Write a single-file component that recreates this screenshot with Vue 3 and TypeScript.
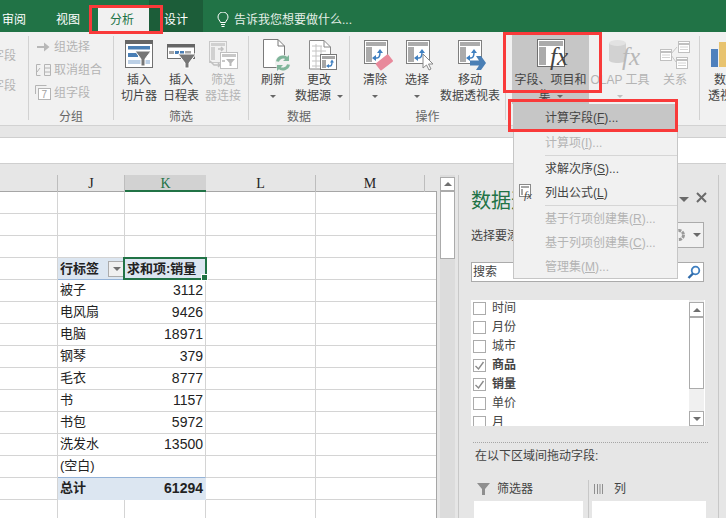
<script setup lang="ts">
interface Row { label: string; value: string }
const topBlank = [0, 1, 2]
const rows: Row[] = [
  { label: '被子', value: '3112' },
  { label: '电风扇', value: '9426' },
  { label: '电脑', value: '18971' },
  { label: '钢琴', value: '379' },
  { label: '毛衣', value: '8777' },
  { label: '书', value: '1157' },
  { label: '书包', value: '5972' },
  { label: '洗发水', value: '13500' },
  { label: '(空白)', value: '' },
]
const heads = [
  { t: '', c: '' },
  { t: 'J', c: '' },
  { t: 'K', c: 'sel' },
  { t: 'L', c: '' },
  { t: 'M', c: '' },
  { t: '', c: 'end' },
]
interface Item { a: string; k: string; b: string; off: boolean; sep: boolean; hi: boolean; fx: boolean }
const items: Item[] = [
  { a: '计算字段(', k: 'F', b: ')...', off: false, sep: false, hi: true, fx: false },
  { a: '计算项(', k: 'I', b: ')...', off: true, sep: true, hi: false, fx: false },
  { a: '求解次序(', k: 'S', b: ')...', off: false, sep: false, hi: false, fx: false },
  { a: '列出公式(', k: 'L', b: ')', off: false, sep: true, hi: false, fx: true },
  { a: '基于行项创建集(', k: 'R', b: ')...', off: true, sep: false, hi: false, fx: false },
  { a: '基于列项创建集(', k: 'C', b: ')...', off: true, sep: false, hi: false, fx: false },
  { a: '管理集(', k: 'M', b: ')...', off: true, sep: false, hi: false, fx: false },
]
const fields = [
  { n: '时间', on: false },
  { n: '月份', on: false },
  { n: '城市', on: false },
  { n: '商品', on: true },
  { n: '销量', on: true },
  { n: '单价', on: false },
  { n: '月', on: false },
]
</script>

<template>
  <div class="app">
    <header class="tabs">
      <span class="tab">审阅</span>
      <span class="tab">视图</span>
      <span class="tab active">分析</span>
      <span class="tab ctx">设计</span>
      <svg class="bulb" width="12" height="16" viewBox="0 0 12 16" fill="none" stroke="#fff" stroke-width="1">
        <path d="M3.5 10.5C3 8.500 1 7.500 1 5a5 5 0 0 1 10 0c0 2.500-2 3.500-2.500 5.500z" />
        <path d="M4 12.500h4M4.500 14.500h3" />
      </svg>
      <span class="tell">告诉我您想要做什么...</span>
    </header>

    <section class="ribbon">
      <div class="grp g0">
        <div class="cut">字段</div>
        <div class="cut">字段</div>
      </div>
      <i class="sep"></i>

      <div class="grp g1">
        <div class="small">
          <svg width="16" height="14" viewBox="0 0 16 14"><path d="M2 6h7V2.500L14.500 7 9 11.500V8H2z" fill="#b8b8b8" /></svg>
          <span>组选择</span>
        </div>
        <div class="small">
          <svg width="16" height="14" viewBox="0 0 16 14" fill="none" stroke="#b4b4b4"><path d="M5.500 1.500h-4v11h4M9.500 1.500h6v11h-6zM9.500 5h6M9.500 9h6M2 9l3-4" /></svg>
          <span>取消组合</span>
        </div>
        <div class="small">
          <svg width="16" height="15" viewBox="0 0 16 15" fill="none" stroke="#b4b4b4"><path d="M.500 9V.500h11" /><rect x="3.500" y="3.500" width="12" height="11" fill="#fff" /><text x="6.500" y="13" class="seven">7</text></svg>
          <span>组字段</span>
        </div>
        <div class="glabel">分组</div>
      </div>
      <i class="sep"></i>

      <div class="grp g2">
        <div class="btns">
          <div class="btn w42">
            <svg width="32" height="32" viewBox="0 0 32 32">
              <rect x="2.500" y="2.500" width="27" height="27" fill="#fff" stroke="#707070" />
              <rect x="2" y="2" width="28" height="4" fill="#666" />
              <rect x="5" y="8" width="22" height="3.500" fill="#4a7fb5" />
              <rect x="5" y="15" width="10" height="4" fill="#4a7fb5" />
              <rect x="5" y="22" width="22" height="4" fill="#bcd0e6" />
              <path d="M12 13h16l-6 8v7h-4v-7z" fill="#767676" stroke="#fff" />
            </svg>
            <span>插入</span><span>切片器</span>
          </div>
          <div class="btn w42">
            <svg width="32" height="32" viewBox="0 0 32 32">
              <rect x="2.500" y="6.500" width="27" height="14" fill="#fff" stroke="#707070" />
              <rect x="2" y="6" width="28" height="3.500" fill="#666" />
              <rect x="4" y="13" width="5" height="3" fill="#a6a6a6" />
              <rect x="10" y="13" width="4" height="3" fill="#4a7fb5" />
              <rect x="15" y="13" width="4" height="3" fill="#4a7fb5" />
              <rect x="20" y="13" width="6" height="3" fill="#a6a6a6" />
              <path d="M13 16h18l-7 9v5h-4v-5z" fill="#767676" stroke="#fff" />
            </svg>
            <span>插入</span><span>日程表</span>
          </div>
          <div class="btn w42 off">
            <svg width="32" height="32" viewBox="0 0 32 32">
              <rect x="2.500" y="3.500" width="17" height="21" fill="#f1f1f1" stroke="#c8c8c8" />
              <rect x="4" y="5" width="14" height="3" fill="#d0d0d0" />
              <rect x="4" y="9" width="4" height="13" fill="#d0d0d0" />
              <path d="M11 11h5M14 9l2 2-2 2M3 23l4 4h6M11 25l2 2-2 2" fill="none" stroke="#c0c0c0" stroke-width="1.500" />
              <rect x="13.500" y="14.500" width="17" height="16" fill="#fff" stroke="#c0c0c0" />
              <rect x="15" y="16" width="14" height="3" fill="#c8c8c8" />
              <path d="M19 21h9l-3.500 4v3h-2v-3z" fill="#b8b8b8" />
              <rect x="15" y="22" width="3" height="2" fill="#c8c8c8" />
            </svg>
            <span>筛选</span><span>器连接</span>
          </div>
        </div>
        <div class="glabel">筛选</div>
      </div>
      <i class="sep"></i>

      <div class="grp g3">
        <div class="btns">
          <div class="btn w46">
            <svg width="32" height="32" viewBox="0 0 32 32" class="vis">
              <path d="M6.500 1.500H21L27.500 8v21.500h-21z" fill="#fff" stroke="#7a7a7a" />
              <path d="M21 1.500V8h6.500" fill="none" stroke="#7a7a7a" />
              <circle cx="26" cy="25" r="8" fill="#f1f1f1" />
              <path d="M20.500 23.500A5.700 5.700 0 0 1 30 20.500M31.500 26.500A5.700 5.700 0 0 1 22 29.500" fill="none" stroke="#7fb59a" stroke-width="3" />
              <path d="M32 17v6h-6zM20 33v-6h6z" fill="#7fb59a" />
            </svg>
            <span>刷新</span><span class="line"><b class="caret"></b></span>
          </div>
          <div class="btn w46">
            <svg width="32" height="32" viewBox="0 0 32 32" class="vis">
              <path d="M6.500 2.500H21L27.500 9v22h-21z" fill="#fff" stroke="#8a8a8a" />
              <path d="M21 2.500V9h6.500" fill="none" stroke="#8a8a8a" />
              <path d="M9 8h10M9 13h14M9 18h14M9 23h10M9 28h8M13 6v24M18 8v22" stroke="#c4c4c4" fill="none" />
              <rect x="17.500" y="16.500" width="16" height="15" fill="#fff" stroke="#777" />
              <rect x="19" y="18" width="13" height="3" fill="#a6a6a6" />
              <rect x="19" y="22" width="4" height="8" fill="#a6a6a6" />
              <path d="M25 28h2q2 0 2-4" fill="none" stroke="#3f7fc0" stroke-width="1.400" />
              <path d="M27 24.500l2-3 2 3zM26 26v4l-3-2z" fill="#3f7fc0" />
            </svg>
            <span>更改</span><span class="line">数据源<b class="caret side"></b></span>
          </div>
        </div>
        <div class="glabel">数据</div>
      </div>
      <i class="sep"></i>

      <div class="grp g4">
        <div class="btns">
          <div class="btn w42">
            <svg width="32" height="32" viewBox="0 0 32 32" class="vis">
              <rect x="5.500" y="2.500" width="23" height="23" fill="#fff" stroke="#7f7f7f" />
              <rect x="7" y="4" width="20" height="4" fill="#ababab" />
              <rect x="7" y="9" width="6" height="15" fill="#ababab" />
              <path d="M16 20h2q3 0 3-6" fill="none" stroke="#3f7fc0" stroke-width="1.500" />
              <path d="M18 15l3-4 3 4zM17 17v6l-4-3z" fill="#3f7fc0" />
              <rect x="17" y="20" width="16" height="9" rx="1" transform="rotate(-38 25 24)" fill="#e8899b" />
            </svg>
            <span>清除</span><span class="line"><b class="caret"></b></span>
          </div>
          <div class="btn w42">
            <svg width="32" height="32" viewBox="0 0 32 32" class="vis">
              <rect x="5.500" y="2.500" width="23" height="23" fill="#fff" stroke="#7f7f7f" />
              <rect x="7" y="4" width="20" height="4" fill="#ababab" />
              <rect x="7" y="9" width="6" height="15" fill="#ababab" />
              <path d="M16 20h2q3 0 3-6" fill="none" stroke="#3f7fc0" stroke-width="1.500" />
              <path d="M18 15l3-4 3 4zM17 17v6l-4-3z" fill="#3f7fc0" />
              <path d="M22 16v14l3.500-3 2.500 5 2-1-2.500-5H32z" fill="#fff" stroke="#888" />
            </svg>
            <span>选择</span><span class="line"><b class="caret"></b></span>
          </div>
          <div class="btn w64">
            <svg width="32" height="32" viewBox="0 0 32 32" class="vis">
              <rect x="4.500" y="2.500" width="23" height="23" fill="#fff" stroke="#7f7f7f" />
              <rect x="6" y="4" width="20" height="4" fill="#ababab" />
              <rect x="6" y="9" width="6" height="15" fill="#ababab" />
              <path d="M15 20h2q3 0 3-6" fill="none" stroke="#3f7fc0" stroke-width="1.500" />
              <path d="M17 15l3-4 3 4zM16 17v6l-4-3z" fill="#3f7fc0" />
              <path d="M16 22.500h9L22 18h5l5 7-5 7h-5l3-4.500h-9z" fill="#4a7fb5" />
            </svg>
            <span>移动</span><span>数据透视表</span>
          </div>
        </div>
        <div class="glabel">操作</div>
      </div>
      <i class="sep"></i>

      <div class="grp g5">
        <div class="btns">
          <div class="btn w77 hot">
            <svg width="34" height="32" viewBox="0 0 34 32" class="vis">
              <rect x="3.500" y="1.500" width="27" height="27" fill="#fff" stroke="#707070" />
              <rect x="5" y="3" width="24" height="5" fill="#ababab" />
              <rect x="5" y="9" width="7" height="18" fill="#ababab" />
              <text x="16" y="27" class="fx">fx</text>
            </svg>
            <span>字段、项目和</span><span class="line">集<b class="caret side"></b></span>
          </div>
          <div class="btn w62 off">
            <svg width="32" height="32" viewBox="0 0 32 32" class="vis">
              <path d="M5 5v17c0 4 17 4 17 0V5z" fill="#d2d2d2" />
              <ellipse cx="13.500" cy="5" rx="8.500" ry="3" fill="#e2e2e2" />
              <text x="18" y="27" class="fx fxoff">fx</text>
            </svg>
            <span>OLAP 工具</span><span class="line"><b class="caret lite"></b></span>
          </div>
          <div class="btn w48 off">
            <svg width="32" height="32" viewBox="0 0 32 32" class="vis">
              <path d="M12 16l6-7M12 17l5 7" stroke="#c8c8c8" fill="none" />
              <rect x="1.500" y="11.500" width="11" height="11" fill="#fff" stroke="#c0c0c0" />
              <rect x="19.500" y="3.500" width="11" height="11" fill="#fff" stroke="#c0c0c0" />
              <rect x="17.500" y="19.500" width="11" height="11" fill="#fff" stroke="#c0c0c0" />
              <path d="M2 14h10M20 6h10M18 22h10" stroke="#c0c0c0" stroke-width="2" />
              <path d="M3 17h8M3 19.500h8M21 9h8M21 11.500h8M19 25h8M19 27.500h8" stroke="#d4d4d4" />
            </svg>
            <span>关系</span>
          </div>
        </div>
      </div>
      <i class="sep"></i>

      <div class="grp g6">
        <div class="btns">
          <div class="btn w52">
            <svg width="32" height="32" viewBox="0 0 32 32" class="vis">
              <rect x="1" y="11" width="7" height="18" fill="#4f81bd" />
              <rect x="9" y="4" width="12" height="25" fill="#e8c36f" />
            </svg>
            <span>数据</span><span>透视表</span>
          </div>
        </div>
      </div>
    </section>

    <div class="band"></div>
    <div class="fbar"></div>
    <div class="gap"></div>

    <main class="main">
      <div class="sheet">
        <div class="colheads">
          <span v-for="(h, i) in heads" :key="i" class="ch" :class="h.c">{{ h.t }}</span>
        </div>
        <div class="body">
          <div v-for="r in topBlank" :key="r" class="row">
            <span class="c"></span><span class="c"></span><span class="c"></span><span class="c"></span><span class="c last"></span>
          </div>
          <div class="row">
            <span class="c"></span>
            <span class="c jc phead"><span>行标签</span><span class="drop"><b></b></span></span>
            <span class="c kc phead selected"><span>求和项:销量</span></span>
            <span class="c"></span><span class="c last"></span>
          </div>
          <div v-for="(r, i) in rows" :key="r.label" class="row">
            <span class="c"></span>
            <span class="c jc" :class="{ lastp: i === rows.length - 1 }">{{ r.label }}</span>
            <span class="c num" :class="{ lastp: i === rows.length - 1 }">{{ r.value }}</span>
            <span class="c"></span><span class="c last"></span>
          </div>
          <div class="row">
            <span class="c"></span>
            <span class="c jc ptotal">总计</span>
            <span class="c num ptotal">61294</span>
            <span class="c"></span><span class="c last"></span>
          </div>
          <div class="row">
            <span class="c"></span><span class="c"></span><span class="c"></span><span class="c"></span><span class="c last"></span>
          </div>
        </div>
      </div>

      <div class="vscroll">
        <div class="vtrack">
          <div class="vbtn"><b class="up"></b></div>
          <div class="vthumb"></div>
        </div>
      </div>

      <aside class="pane">
        <div class="ptitle">
          <span class="ptext">数据透视表字段</span>
          <b class="pcaret"></b>
          <svg width="11" height="11" viewBox="0 0 11 11"><path d="M1 1l9 9M10 1l-9 9" stroke="#6a6a6a" stroke-width="2" /></svg>
        </div>
        <div class="pick">
          <span class="picktext">选择要添加到报表的字段:</span>
          <div class="gearbox">
            <svg width="14" height="14" viewBox="0 0 14 14"><circle cx="7" cy="7" r="4.500" fill="none" stroke="#9a9a9a" stroke-width="3" stroke-dasharray="3 1" /></svg>
            <b class="pcaret mini"></b>
          </div>
        </div>
        <div class="search">
          <span>搜索</span>
          <svg width="14" height="14" viewBox="0 0 14 14"><circle cx="8.500" cy="5.500" r="3.800" fill="none" stroke="#3f7fc0" stroke-width="1.800" /><path d="M6 8.500L1.500 13" stroke="#2f6aa8" stroke-width="2.400" /></svg>
        </div>
        <div class="list">
          <div class="lrows">
            <div v-for="f in fields" :key="f.n" class="lrow">
              <span class="cb">
                <svg v-if="f.on" width="11" height="11" viewBox="0 0 11 11"><path d="M1.500 6l3 3 5-7" fill="none" stroke="#8a8a8a" stroke-width="1.400" /></svg>
              </span>
              <span class="ltext" :class="{ strong: f.on }">{{ f.n }}</span>
            </div>
          </div>
          <div class="lscroll">
            <div class="lbtn"><b class="up"></b></div>
            <div class="lthumb"></div>
            <div class="lspace"></div>
            <div class="lbtn"><b class="down"></b></div>
          </div>
        </div>
        <div class="dots"></div>
        <div class="drag">在以下区域间拖动字段:</div>
        <div class="areas">
          <div class="area left">
            <div class="ahead">
              <svg width="13" height="12" viewBox="0 0 13 12"><path d="M0 0h13L8 6v6H5V6z" fill="#8f8f8f" /></svg>
              <span>筛选器</span>
            </div>
            <div class="abox"></div>
          </div>
          <div class="area right">
            <div class="ahead">
              <svg width="9" height="10" viewBox="0 0 9 10"><path d="M.5 0v10M3.500 0v10M6 0v10M8.500 0v10" stroke="#8f8f8f" /></svg>
              <span class="lie">列</span>
            </div>
            <div class="abox"></div>
          </div>
        </div>
      </aside>
    </main>

    <nav class="menu">
      <template v-for="m in items" :key="m.a">
        <div class="mi" :class="{ off: m.off, hi: m.hi }">
          <svg v-if="m.fx" class="mfx" width="16" height="17" viewBox="0 0 16 17">
            <rect x=".5" y=".5" width="11" height="12" fill="#fff" stroke="#8a8a8a" />
            <path d="M2 2h8v2H2zM2 5h2v6H2z" fill="#a6a6a6" />
            <text x="5" y="15" class="fxs">fx</text>
          </svg>
          <span class="mt">{{ m.a }}<u>{{ m.k }}</u>{{ m.b }}</span>
        </div>
        <div v-if="m.sep" class="msep"></div>
      </template>
    </nav>

    <div class="red r1"></div>
    <div class="red r2"></div>
    <div class="red r3"></div>
  </div>
</template>

<style>
html, body { margin: 0; overflow: hidden; }
</style>

<style scoped>
.app {
  position: relative;
  width: 726px;
  height: 518px;
  overflow: hidden;
  display: flex;
  flex-direction: column;
  background: #e6e6e6;
  color: #444;
  font: 12px/16px "Liberation Sans", "Noto Sans CJK SC", sans-serif;
}
.tabs {
  flex: none;
  height: 32px;
  display: flex;
  background: #217346;
  color: #fff;
}
.tab {
  flex: none;
  width: 54px;
  height: 32px;
  display: flex;
  align-items: center;
  justify-content: center;
  padding-top: 8px;
  box-sizing: border-box;
}
.tab:first-child { margin-left: -13px; }
.tab.active {
  width: 51px;
  height: 25px;
  margin: 7px 0 0 3px;
  padding: 0 3px 0 0;
  background: #f1f1f1;
  color: #217346;
}
.tab.ctx { background: #1c5d39; }
.bulb { margin: 12px 0 0 14px; flex: none; }
.tell { margin: 12px 0 0 5px; color: #e4efe8; }

.ribbon {
  flex: none;
  height: 93px;
  display: flex;
  background: #f1f1f1;
}
.sep {
  flex: none;
  width: 1px;
  margin: 4px 0 5px;
  background: #d2d2d2;
}
.grp { flex: none; display: flex; flex-direction: column; overflow: hidden; }
.g0 { width: 28px; padding-top: 9px; box-sizing: border-box; }
.g1 { width: 84px; padding-top: 3px; box-sizing: border-box; }
.g2 { width: 134px; }
.g3 { width: 100px; }
.g4 { width: 155px; }
.g5 { width: 193px; overflow: visible; }
.g6 { width: 52px; }
.cut {
  height: 30px;
  line-height: 30px;
  margin-left: -8px;
  color: #b4b4b4;
  white-space: nowrap;
}
.small {
  height: 23px;
  padding-left: 6px;
  display: flex;
  align-items: center;
  gap: 3px;
  color: #b4b4b4;
  white-space: nowrap;
}
.seven { font: 10px "Liberation Sans", sans-serif; fill: #a0a0a0; stroke: none; }
.btns { height: 72px; display: flex; }
.g2 .btns { padding-left: 4px; }
.g3 .btns { padding-left: 1px; }
.g4 .btns { padding-left: 4px; }
.g5 .btns { padding-left: 6px; }
.btn {
  flex: none;
  box-sizing: border-box;
  height: 72px;
  padding-top: 6px;
  display: flex;
  flex-direction: column;
  align-items: center;
  white-space: nowrap;
}
.btn svg { flex: none; margin-bottom: 2px; }
.vis { overflow: visible; }
.w42 { width: 42px; }
.w46 { width: 46px; }
.w48 { width: 48px; }
.w52 { width: 52px; }
.w62 { width: 62px; }
.w64 { width: 64px; }
.w77 { width: 77px; }
.off { color: #b4b4b4; }
.hot { background: #c6c6c6; }
.line { display: flex; align-items: center; height: 16px; }
.caret {
  display: block;
  width: 0;
  height: 0;
  border: 3px solid transparent;
  border-top: 3px solid #666;
  border-bottom: 0;
}
.caret.side { margin-left: 6px; }
.caret.lite { border-top-color: #c0c0c0; }
.glabel {
  height: 16px;
  margin-top: 5px;
  text-align: center;
  color: #666;
}
.fx {
  font: italic 25px "Liberation Serif", serif;
  fill: #444;
}
.fxoff { fill: #b8b8b8; }
.fxs { font: italic 11px "Liberation Serif", serif; fill: #444; }

.band { flex: none; height: 12px; box-sizing: border-box; border-top: 1px solid #d2d2d2; }
.fbar {
  flex: none;
  height: 27px;
  box-sizing: border-box;
  background: #fff;
  border-top: 1px solid #cfcfcf;
  border-bottom: 1px solid #cfcfcf;
}
.gap { flex: none; height: 11px; }

.main { flex: 1; min-height: 0; display: flex; overflow: hidden; }
.sheet { flex: none; width: 437px; overflow: hidden; }
.colheads {
  display: grid;
  grid-template-columns: 58px 67px 81px 110px 109px 12px;
  height: 17px;
  box-sizing: border-box;
  border-bottom: 1px solid #a6a6a6;
}
.ch {
  border-right: 1px solid #bdbdbd;
  text-align: center;
  font: 14px/17px "Liberation Serif", serif;
  color: #222;
}
.ch.sel {
  height: 17px;
  box-sizing: border-box;
  background: #d2d2d2;
  color: #217346;
  border-bottom: 2px solid #217346;
  border-right: 0;
}
.ch.end { border-right: 0; }
.body { background: #fff; border-right: 1px solid #a6a6a6; height: 326px; overflow: hidden; }
.row {
  display: grid;
  grid-template-columns: 58px 67px 81px 110px 120px;
  height: 22px;
  font: 13px/21px "Liberation Sans", "Noto Sans CJK SC", sans-serif;
  color: #222;
}
.c {
  box-sizing: border-box;
  height: 22px;
  border-right: 1px solid #d4d4d4;
  border-bottom: 1px solid #d4d4d4;
  white-space: nowrap;
}
.c.last { border-right: 0; }
.jc { padding-left: 2px; border-right: 0; line-height: 20px; }
.num {
  font-size: 14px;
  text-align: right;
  padding-right: 2px;
}
.phead {
  background: #dce6f1;
  font-weight: 700;
  border-bottom-color: #95b3d7;
}
.jc.phead { display: flex; justify-content: space-between; align-items: center; }
.kc.phead { padding-left: 2px; }
.drop {
  flex: none;
  box-sizing: border-box;
  width: 17px;
  height: 16px;
  border: 1px solid #ababab;
  background: #f0f0f0;
  display: flex;
  align-items: center;
  justify-content: center;
}
.drop b {
  width: 0;
  height: 0;
  border: 4px solid transparent;
  border-top: 4px solid #6f6f6f;
  border-bottom: 0;
}
.selected { position: relative; overflow: visible; }
.selected::after {
  content: "";
  position: absolute;
  left: -2px;
  top: -1px;
  right: -2px;
  bottom: -1px;
  border: 2px solid #217346;
}
.selected::before {
  content: "";
  position: absolute;
  right: -3px;
  bottom: -2px;
  width: 5px;
  height: 5px;
  background: #217346;
  border: 1px solid #fff;
  z-index: 1;
}
.lastp { border-bottom-color: #95b3d7; }
.ptotal {
  background: #dce6f1;
  font-weight: 700;
  border-bottom-color: #dce6f1;
}
.num.ptotal { border-right-color: #dce6f1; }

.vscroll { flex: none; width: 21px; padding: 0 3px; box-sizing: border-box; }
.vtrack { height: 100%; background: #dcdcdc; box-sizing: border-box; padding-top: 2px; }
.vbtn {
  height: 14px;
  box-sizing: border-box;
  background: #fff;
  border: 1px solid #ababab;
  display: flex;
  align-items: center;
  justify-content: center;
}
.vthumb { height: 68px; box-sizing: border-box; background: #fff; border: 1px solid #ababab; }
.up, .down {
  width: 0;
  height: 0;
  border: 4px solid transparent;
}
.up { border-bottom: 4px solid #6f6f6f; border-top: 0; }
.down { border-top: 4px solid #6f6f6f; border-bottom: 0; }

.pane {
  flex: none;
  width: 261px;
  box-sizing: border-box;
  border-left: 1px solid #c8c8c8;
  border-right: 1px solid #c8c8c8;
  padding: 14px 0 0 12px;
}
.ptitle { display: flex; align-items: center; width: 236px; height: 26px; }
.ptext {
  flex: none;
  width: 42px;
  overflow: hidden;
  font: 20px/26px "Liberation Sans", "Noto Sans CJK SC", sans-serif;
  color: #217346;
  white-space: nowrap;
  margin-top: -2px;
}
.pcaret {
  width: 0;
  height: 0;
  border: 5px solid transparent;
  border-top: 5px solid #6a6a6a;
  border-bottom: 0;
  margin-left: auto;
  margin-right: 7px;
  margin-top: -6px;
}
.ptitle svg { margin-top: -10px; }
.pick { display: flex; align-items: center; width: 233px; height: 26px; margin-top: 7px; }
.picktext { flex: none; width: 42px; overflow: hidden; white-space: nowrap; margin-top: 2px; }
.gearbox {
  flex: none;
  width: 46px;
  height: 26px;
  margin-left: auto;
  box-sizing: border-box;
  border: 1px solid #ababab;
  background: #f1f1f1;
  display: flex;
  align-items: center;
  justify-content: flex-end;
  gap: 7px;
  padding-right: 2px;
}
.pcaret.mini { border-width: 4px; border-bottom: 0; margin: 0; }
.search {
  box-sizing: border-box;
  width: 233px;
  height: 20px;
  margin-top: 14px;
  background: #fff;
  border: 1px solid #ababab;
  display: flex;
  align-items: center;
  justify-content: space-between;
  padding: 0 1px;
  font-size: 12px;
}
.search svg { margin-right: 1px; }
.list {
  width: 234px;
  height: 126px;
  margin-top: 18px;
  background: #fff;
  display: flex;
  overflow: hidden;
}
.lrows { flex: 1; margin-top: -1px; }
.lrow { height: 19px; display: flex; align-items: center; gap: 6px; padding-left: 2px; color: #444; }
.ltext { margin-top: -2px; }
.cb {
  flex: none;
  box-sizing: border-box;
  width: 13px;
  height: 13px;
  border: 1px solid #ababab;
  display: flex;
  align-items: center;
  justify-content: center;
  background: #fff;
}
.strong { font-weight: 700; }
.lscroll {
  flex: none;
  width: 15px;
  margin-right: 1px;
  padding-top: 2px;
  height: 124px;
  display: flex;
  flex-direction: column;
  background: #f0f0f0;
}
.lbtn {
  flex: none;
  height: 15px;
  box-sizing: border-box;
  border: 1px solid #ababab;
  background: #fff;
  display: flex;
  align-items: center;
  justify-content: center;
}
.lthumb { flex: none; height: 72px; box-sizing: border-box; border: 1px solid #ababab; background: #fff; }
.lspace { flex: 1; }
.dots {
  width: 235px;
  margin: 16px 0 0 2px;
  border-top: 1px dotted #a6a6a6;
}
.drag { margin: 5px 0 0 4px; color: #444; }
.areas { display: flex; margin: 16px 0 0 3px; }
.area { flex: none; }
.area.left { width: 115px; box-sizing: border-box; border-right: 1px solid #c8c8c8; }
.area.right { width: 117px; padding-left: 3px; box-sizing: border-box; }
.ahead { height: 17px; margin-bottom: 4px; display: flex; align-items: center; gap: 7px; padding-left: 3px; }
.right .ahead { padding-left: 2px; gap: 11px; }
.abox { height: 30px; background: #fff; }
.left .abox { width: 109px; }
.right .abox { width: 114px; }

.menu {
  position: absolute;
  left: 513px;
  top: 104px;
  width: 165px;
  height: 175px;
  box-sizing: border-box;
  border: 1px solid #c6c6c6;
  background: #f1f1f1;
  z-index: 5;
}
.mi {
  position: relative;
  height: 24px;
  line-height: 24px;
  padding-left: 31px;
  color: #444;
  white-space: nowrap;
}
.mi.hi { height: 26px; line-height: 27px; background: #c6c6c6; }
.mi.off { color: #b4b4b4; }
.msep { height: 1px; margin: 0 0 1px 31px; background: #d6d6d6; }
.mfx { position: absolute; left: 5px; top: 3px; }

.red {
  position: absolute;
  box-sizing: border-box;
  border: 3px solid #f93a3a;
  z-index: 6;
}
.r1 { left: 89px; top: 5px; width: 74px; height: 29px; }
.r2 { left: 503px; top: 32px; width: 99px; height: 61px; }
.r3 { left: 508px; top: 99px; width: 170px; height: 33px; }
</style>
